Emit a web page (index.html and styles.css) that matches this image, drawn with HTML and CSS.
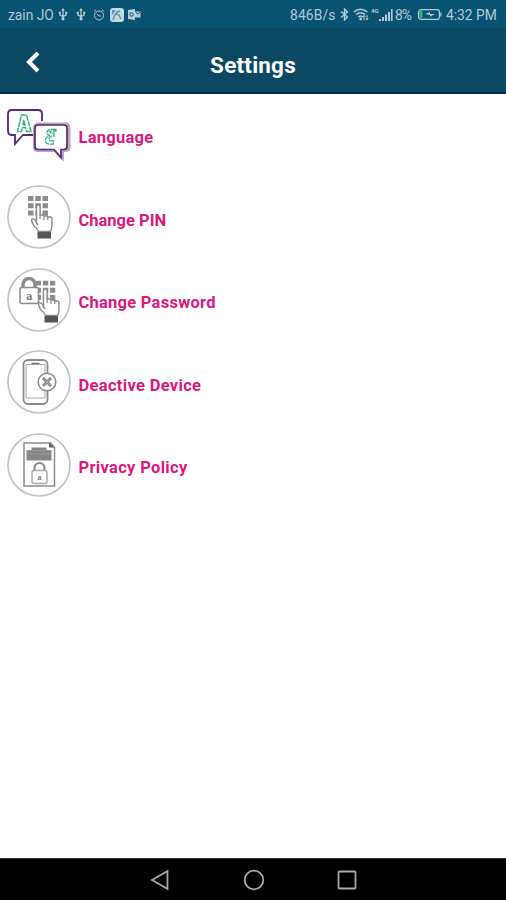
FILE: index.html
```html
<!DOCTYPE html>
<html lang="en">
<head>
<meta charset="utf-8">
<title>Settings</title>
<link rel="stylesheet" href="styles.css">
</head>
<body>
<svg class="defs" width="0" height="0">
  <defs>
    <symbol id="usb" viewBox="0 0 10 14">
      <path d="M5 1.5v10M1.5 5v2.3L5 9.5M8.5 5v2.3L5 9.5" fill="none" stroke="currentColor" stroke-width="1.4"/>
      <path d="M5 0l2 3H3zM.3 4h2.4v2H.3zM7.3 4h2.4v2H7.3z" fill="currentColor"/>
      <circle cx="5" cy="11.7" r="1.7" fill="currentColor"/>
    </symbol>
    <symbol id="keys" viewBox="0 0 20 20">
      <path d="M0 0h5.500v5H0zM7.300 0h5.500v5H7.300zM14.500 0H20v5h-5.500zM0 7.200h5.500v5H0zM7.300 7.200h5.500v5H7.300zM14.500 7.200H20v5h-5.500zM0 14.500h5.500v5H0zM7.300 14.500h5.500v5H7.300zM14.500 14.500H20v5h-5.500z" fill="#8c8c8c"/>
    </symbol>
    <symbol id="hand" viewBox="0 0 24 36">
      <path d="M7 20V3.500Q7 2 8.800 2T10.600 3.500V12h4v1h3.500v1h2.800q1.600 0 1.600 1.500V22q0 4-1.500 6.500H9Q7.500 25 4.500 23 2 19 2 17t2.500-.8T7 20l1.500 2" fill="#fff" stroke="#8a8a8a" stroke-width="1.400"/>
      <path d="M10.600 11v5M14.500 12v5M18.200 13v4" stroke="#8a8a8a" stroke-width="1.200"/>
      <path d="M8 29h13.500v6.500H8z" fill="#555"/>
    </symbol>
  </defs>
</svg>
<div class="screen">
  <div class="status">
    <span class="carrier">zain JO</span>
    <svg class="usb" width="10" height="13"><use href="#usb"/></svg>
    <svg class="usb second" width="10" height="13"><use href="#usb"/></svg>
    <svg class="clock" width="12" height="12" viewBox="0 0 12 12" fill="none" stroke="currentColor"><circle cx="6" cy="6.5" r="4.5"/><path d="M4 5l2 2h2M1 2.5L3 .8M11 2.5L9 .8"/></svg>
    <svg class="app" width="14" height="14" viewBox="0 0 14 14"><rect width="14" height="14" rx="3" fill="#c4d8e1"/><path d="M2 2h4L2 7z" fill="#4e9dc0"/><path d="M3 12c1-4 3-8 6-9M6 6l3 1 2 4M8 4l2-1" fill="none" stroke="#5a98aa" stroke-width="1.5"/></svg>
    <svg class="mail" width="13" height="11" viewBox="0 0 13 11"><path d="M0 1l7-1v11l-7-1z" fill="currentColor"/><path d="M7 2.5h5.5v6H7" fill="currentColor"/><circle cx="3.5" cy="5.5" r="1.700" fill="none" stroke="#0a5270"/><path d="M7.500 3l2.300 2 2.300-2" fill="none" stroke="#0a5270"/></svg>
    <span class="speed">846B/s</span>
    <svg class="bt" width="9" height="13" viewBox="0 0 9 13"><path d="M1 3.5l6.500 5.500L4.500 12V1l3 3L1 9.500" fill="none" stroke="currentColor" stroke-width="1.400"/></svg>
    <svg class="wifi" width="16" height="13" viewBox="0 0 16 13" fill="none" stroke="currentColor" stroke-width="1.5"><path d="M.8 4Q7.500-1.500 14.500 4M3 6.500q4.500-3.700 9.300 0M5.300 9q2.400-2 4.700 0"/><circle cx="7.700" cy="11" r=".7"/><path d="M11 12V7.500M14 7v5M9.800 9L11 7.500l1.200 1.500M12.800 10.500L14 12l1.200-1.500" stroke-width="1"/></svg>
    <span class="net">4G</span>
    <svg class="signal" width="14" height="12" viewBox="0 0 14 12"><path d="M0 10h2v2H0zM3 8h2v4H3zM6 5.500h2V12H6zM9 3h2v9H9zM12 0h1.600v12H12z" fill="currentColor"/></svg>
    <span class="percent">8%</span>
    <svg class="battery" width="24" height="11" viewBox="0 0 24 11"><rect x=".6" y=".6" width="20.800" height="9.800" rx="2.500" fill="none" stroke="currentColor" stroke-width="1.200"/><path d="M1.500 2h3v7h-3z" fill="#22bd71"/><path d="M22.300 3.500h1.200v4h-1.200z" fill="currentColor"/><path d="M7 5l5-2v2h5l-5 2.800V6z" fill="currentColor"/></svg>
    <span class="time">4:32 PM</span>
  </div>
  <header class="header">
    <svg class="back" width="16" height="22" viewBox="0 0 16 22"><path d="M13 2L4 11l9 9" fill="none" stroke="#fff" stroke-width="4"/></svg>
    <h1 class="title">Settings</h1>
  </header>
  <main class="list">
    <div class="row">
      <svg class="icon" viewBox="0 0 64 64">
        <path d="M30 32H16l-8 9v-9H5q-4 0-4-4V11q0-4 4-4h26q4 0 4 4v7" fill="none" stroke="#5b2879" stroke-width="1.800"/>
        <path d="M32 21.500h26q3.500 0 3.500 3.500v19q0 3-3.500 3h-3v7l-7-7H31q-3 0-3-3V25q0-3.500 4-3.500z" fill="#fff" stroke="#b8a4c5" stroke-width="4"/>
        <path d="M31 22h26q3 0 3 3v18.500q0 3-3 3h-3v8l-7-8H31q-3 0-3-3V25q0-3 3-3z" fill="#fff" stroke="#5b2879" stroke-width="1.700"/>
        <path d="M14.500 12h5l4.500 16.500h-4.500l-1-4h-3l-1 4H10.500zM16.900 17l-1 5h2z" fill="#fff" stroke="#35ad82" stroke-width="1.500" stroke-dasharray="5 .8"/>
        <path d="M49 26.500q-10-1-9 4 .5 2 3 2-5 1.500-4.500 6 .5 3.500 8 2.500v-3q-4.500.5-4.500-2 0-3 5-3v-3q-4 .5-4-1t6-1z" fill="#fff" stroke="#35ad82" stroke-width="1.300" stroke-dasharray="5 .8"/>
      </svg>
      <span class="label">Language</span>
    </div>
    <div class="row">
      <svg class="icon" viewBox="0 0 64 64">
        <circle cx="32" cy="32" r="31" fill="none" stroke="#c2c2c2" stroke-width="1.700"/>
        <use href="#keys" x="21" y="11" width="20" height="20"/>
        <use href="#hand" x="22.500" y="18" width="24" height="36"/>
      </svg>
      <span class="label pin">Change PIN</span>
    </div>
    <div class="row">
      <svg class="icon" viewBox="0 0 64 64">
        <circle cx="32" cy="32" r="31" fill="none" stroke="#c2c2c2" stroke-width="1.700"/>
        <use href="#keys" x="28.500" y="12.500" width="20" height="20"/>
        <use href="#hand" x="29.500" y="19" width="24" height="36"/>
        <path d="M16 20v-3.500a6 6 0 0 1 12 0V20" fill="none" stroke="#8a8a8a" stroke-width="3.400"/>
        <rect x="13" y="19.500" width="18.500" height="16" rx="2" fill="#fff" stroke="#8a8a8a" stroke-width="1.500"/>
        <text class="lock-letter" x="22.300" y="31.500">a</text>
      </svg>
      <span class="label">Change Password</span>
    </div>
    <div class="row">
      <svg class="icon" viewBox="0 0 64 64">
        <circle cx="32" cy="32" r="31" fill="none" stroke="#c2c2c2" stroke-width="1.700"/>
        <rect x="16.500" y="10" width="24" height="44" rx="4.500" fill="#fff" stroke="#8a8a8a" stroke-width="1.800"/>
        <path d="M19 14.500v33.500h19V14.500z" fill="none" stroke="#aaa"/>
        <path d="M24.500 13.500h8" stroke="#777" stroke-width="1.500"/>
        <circle cx="40" cy="32" r="8.800" fill="#fff" stroke="#8a8a8a" stroke-width="1.500"/>
        <path d="M36 28l8 8m0-8l-8 8" stroke="#858585" stroke-width="3"/>
        <path d="M37 29l6 6m0-6l-6 6" stroke="#ccc" stroke-width=".6"/>
      </svg>
      <span class="label device">Deactive Device</span>
    </div>
    <div class="row">
      <svg class="icon" viewBox="0 0 64 64">
        <circle cx="32" cy="32" r="31" fill="none" stroke="#c2c2c2" stroke-width="1.700"/>
        <path d="M17 10h26.500l4 4.500V53H17z" fill="#fff" stroke="#8a8a8a" stroke-width="1.500"/>
        <path d="M42 9.500v5h5.500z" fill="#666"/>
        <path d="M19.500 17h5v-2.500h15V17h5v10.500h-25z" fill="#858585"/>
        <path d="M19.500 17.500h25M19.500 21h25" stroke="#aaa" stroke-width=".6"/>
        <path d="M27.500 38v-3a5 5 0 0 1 10 0v3" fill="none" stroke="#8a8a8a" stroke-width="2.200"/>
        <rect x="25" y="37.500" width="15" height="13" rx="2" fill="#fff" stroke="#aaa" stroke-width="1.500"/>
        <text class="lock-letter small" x="32.500" y="47">a</text>
      </svg>
      <span class="label policy">Privacy Policy</span>
    </div>
  </main>
  <nav class="nav">
    <svg width="20" height="22" viewBox="0 0 20 22"><path d="M17.500 2v18L2 11z"/></svg>
    <svg width="22" height="22" viewBox="0 0 22 22"><circle cx="11" cy="11" r="9.300"/></svg>
    <svg width="20" height="22" viewBox="0 0 20 22"><rect x="1.500" y="2.500" width="17" height="17" rx=".8"/></svg>
  </nav>
</div>
</body>
</html>
```

FILE: styles.css
```css
* { box-sizing: border-box; }
body { margin: 0; background: #fff; font-family: Roboto, "Liberation Sans", sans-serif; }
.defs { display: block; }
.screen { display: flex; flex-direction: column; width: 506px; height: 900px; }
.status {
  display: flex; align-items: center; height: 28px; padding: 1px 9px 0 8px;
  background: #085371; color: #b5cbd5; font-size: 13.8px; line-height: 28px; white-space: nowrap;
}
.status svg, .status span { flex: none; }
.carrier { width: 50px; }
.second { margin-left: 8px; }
.clock { margin-left: 7px; }
.app { margin-left: 5px; }
.mail { margin-left: 4px; }
.speed { width: 46px; margin-left: auto; letter-spacing: .15px; }
.bt { margin-left: 4px; }
.wifi { margin-left: 4px; }
.net { width: 8px; margin: -8px 0 0 2px; font-size: 6px; font-weight: 700; }
.signal { margin-left: 0; }
.percent { width: 20px; margin-left: 2px; letter-spacing: -0.9px; }
.battery { margin-left: 3px; }
.time { width: 51px; margin-left: 4px; }
.header {
  display: grid; grid-template-columns: 40px 1fr 40px; align-items: center;
  height: 66px; background: #0b4861; border-bottom: 2px solid #073057;
}
.back { margin: 3px 0 0 25px; }
.title { margin: 9px 0 0; color: #fff; text-align: center; font-size: 22.5px; font-weight: 700; line-height: 30px; letter-spacing: .2px; }
.list { flex: 1; }
.row { display: flex; align-items: center; height: 82.5px; padding-left: 7px; }
.icon { flex: none; width: 64px; height: 64px; margin-bottom: 1.5px; }
.label { margin: 5.5px 0 0 7.5px; color: #dc187e; font-size: 16.5px; font-weight: 700; line-height: 24px; letter-spacing: .25px; white-space: nowrap; }
.pin { letter-spacing: 0; }
.device, .policy { letter-spacing: .32px; }
.lock-letter { fill: #777; font: 700 12px "Liberation Serif", serif; text-anchor: middle; }
.small { font-size: 8px; }
.nav {
  display: flex; align-items: center; justify-content: space-between; height: 42px;
  padding: 0 149px 0 150px; background: #000; border-top: 1px solid #333;
}
.nav svg { fill: none; stroke: #aaa; stroke-width: 1.8; }
```
